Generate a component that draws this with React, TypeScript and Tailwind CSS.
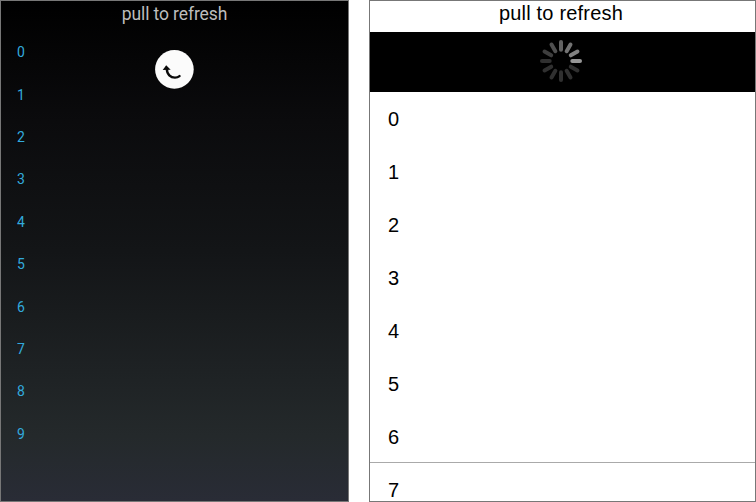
const leftItems = ['0', '1', '2', '3', '4', '5', '6', '7', '8', '9'];
const rightItems = ['0', '1', '2', '3', '4', '5', '6'];

// Spoke colours, clockwise from twelve o'clock.
const spokes = [
  '#626262', '#737373', '#828282', '#969696', '#303030', '#303030',
  '#303030', '#303030', '#303030', '#303030', '#3e3e3e', '#505050',
];

function PullArrow() {
  return (
    <svg width="40" height="40" viewBox="0 0 40 40" className="block">
      <circle cx="20.4" cy="20.4" r="19.3" fill="#fbfbfb" />
      <path d="M12.8 19.5C12.8 25.5 16.7 28.6 21 28.6C22.9 28.6 24.3 28.1 25.5 27.1" fill="none" stroke="#0a0a0a" strokeWidth="2.4" strokeLinecap="round" />
      <path d="M12.2 16.3L16.7 20.7L8.7 20.9Z" fill="#0a0a0a" />
    </svg>
  );
}

function Spinner() {
  return (
    <svg width="44" height="44" viewBox="-22 -22 44 44" className="block">
      {spokes.map((color, i) => (
        <line key={i} x1="0" y1="-11.3" x2="0" y2="-19" stroke={color} strokeWidth="4" strokeLinecap="round" transform={`rotate(${i * 30})`} />
      ))}
    </svg>
  );
}

export default function App() {
  return (
    <div className="flex h-[502px] w-[756px] justify-between overflow-hidden bg-white">
      <section className="flex h-full w-[349px] flex-col border border-[#777] bg-[linear-gradient(to_bottom,#000_0%,#0b0b0d_24%,#131517_50%,#24292b_87%,#292c36_100%)] font-['Roboto',sans-serif]">
        <h1 className="h-[30px] text-center text-[17.5px] leading-[27px] tracking-[-0.1px] text-[#bdbdbd]">pull to refresh</h1>
        <div className="flex">
          <ul className="w-[153px] pl-4 text-[14px] text-[#32aadd]">
            {leftItems.map((item) => (
              <li key={item} className="flex h-[42.4px] items-center pt-px">{item}</li>
            ))}
          </ul>
          <div className="pt-[18px]">
            <PullArrow />
          </div>
        </div>
      </section>
      <section className="flex h-full w-[387px] flex-col overflow-hidden border border-[#777] bg-white font-['Liberation_Sans',Arial,sans-serif] text-black">
        <h1 className="h-[31px] shrink-0 pr-[3px] text-center text-[20px] leading-[25px] tracking-[0.2px]">pull to refresh</h1>
        <div className="flex h-[60px] shrink-0 justify-center bg-black pt-[7px] pr-[3px]">
          <Spinner />
        </div>
        <ul className="min-h-0 flex-1 overflow-hidden text-[20px]">
          {rightItems.map((item) => (
            <li key={item} className="flex h-[53px] items-center pl-[18px]">{item}</li>
          ))}
          <li className="-mt-px flex h-[54px] items-center border-t border-[#aaa] pl-[18px]">7</li>
        </ul>
      </section>
    </div>
  );
}
